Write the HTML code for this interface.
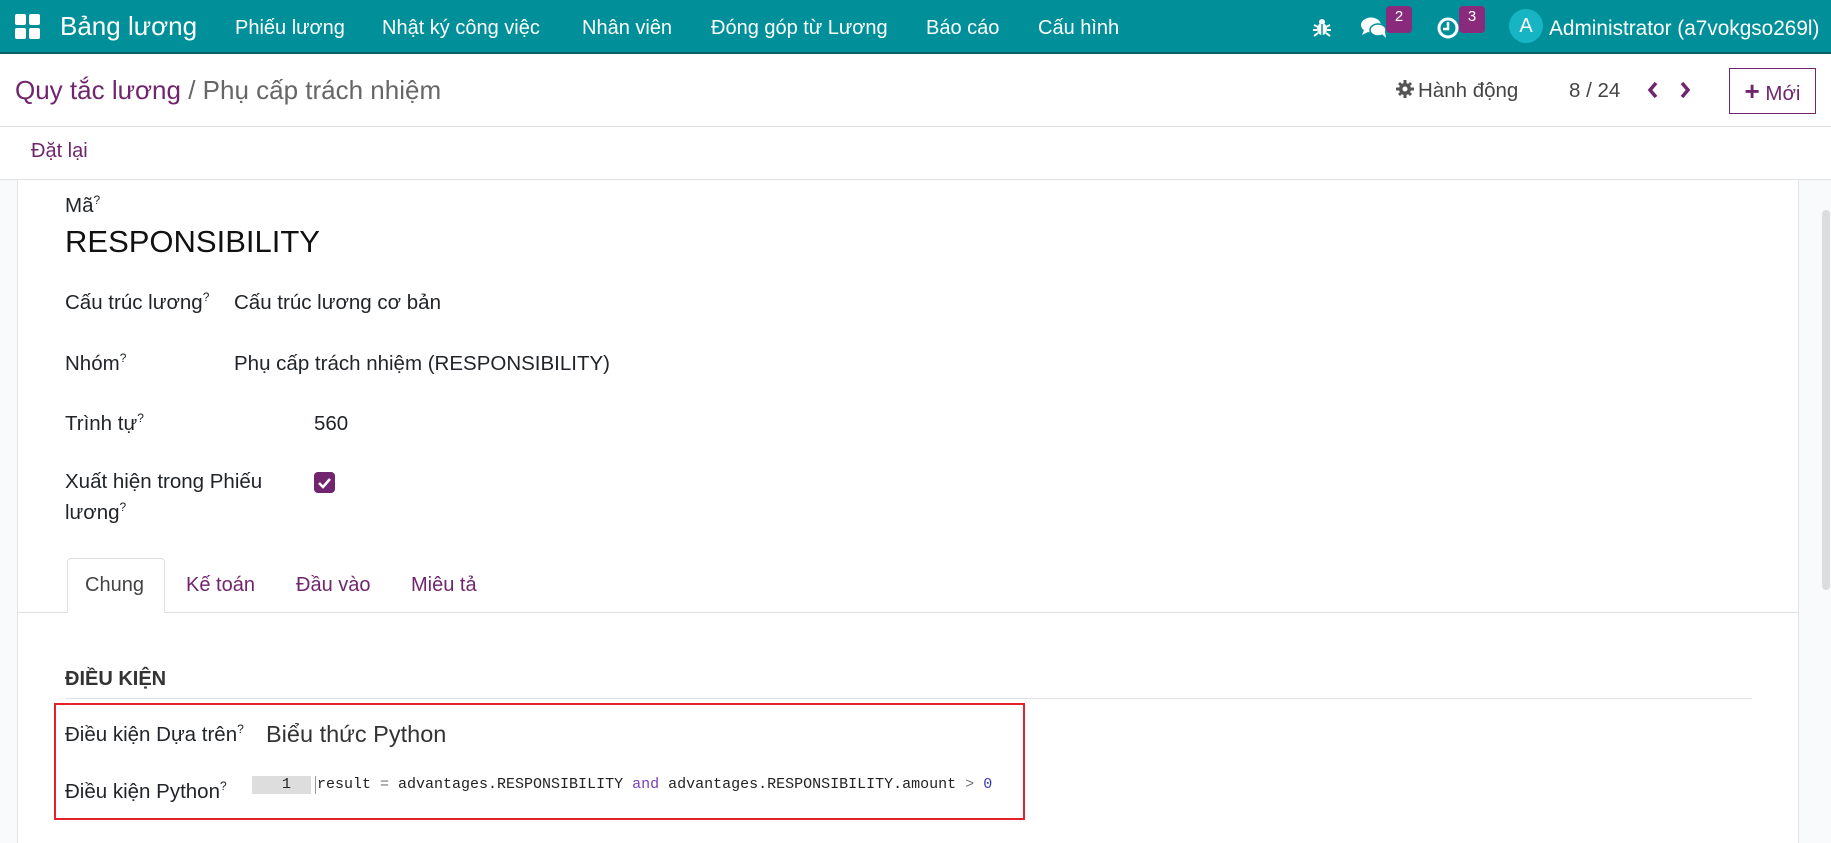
<!DOCTYPE html>
<html><head><meta charset="utf-8"><style>
*{margin:0;padding:0;box-sizing:border-box}
body{width:1831px;height:843px;overflow:hidden;background:#fff;font-family:"Liberation Sans","Noto Sans CJK SC",sans-serif;color:#212529;position:relative}
.a{position:absolute;white-space:nowrap}
.nav{position:absolute;left:0;top:0;width:1831px;height:54px;background:#01909a;border-bottom:2px solid #0a6068}
.nav .a{color:#fff;font-size:20px;top:17px}
.badge{position:absolute;background:#8a2a7d;color:#fff;font-size:15px;border-radius:4px;width:26px;height:27px;text-align:center;line-height:22px;top:6px}
.lbl{font-size:20.5px;color:#212529}
.sup{font-size:12px;vertical-align:super}
.tab{font-size:20px;color:#71256e;top:574px}
</style></head><body>
<div class="nav">
 <svg class="a" style="left:15px;top:14px" width="26" height="26" viewBox="0 0 26 26"><g fill="#fff"><rect x="0" y="0" width="11" height="11" rx="2"/><rect x="14" y="0" width="11" height="11" rx="2"/><rect x="0" y="14" width="11" height="11" rx="2"/><rect x="14" y="14" width="11" height="11" rx="2"/></g></svg>
 <div class="a" style="left:60px;top:11px !important;font-size:26px">Bảng lương</div>
 <div class="a" style="left:235px">Phiếu lương</div>
 <div class="a" style="left:382px">Nhật ký công việc</div>
 <div class="a" style="left:582px">Nhân viên</div>
 <div class="a" style="left:711px">Đóng góp từ Lương</div>
 <div class="a" style="left:926px">Báo cáo</div>
 <div class="a" style="left:1038px">Cấu hình</div>
 <svg class="a" style="left:1312px;top:17px" width="20" height="20" viewBox="0 0 20 20"><g fill="#fff"><ellipse cx="10" cy="12" rx="5" ry="6"/><circle cx="10" cy="5" r="3"/></g><g stroke="#fff" stroke-width="2"><path d="M2 8l4 2M18 8l-4 2M1 13h4M19 13h-4M2 19l4-3M18 19l-4-3"/></g><path d="M10 7v11" stroke="#01909a" stroke-width="1.5"/></svg>
 <svg class="a" style="left:1360px;top:16px" width="28" height="24" viewBox="0 0 28 24"><ellipse cx="11" cy="9" rx="10" ry="7.5" fill="#fff"/><path d="M4 14l-2 5 6-3z" fill="#fff"/><ellipse cx="18" cy="14" rx="8" ry="6" fill="#fff" stroke="#01909a" stroke-width="1.5"/><path d="M22 18l4 4-1-6z" fill="#fff"/></svg>
 <div class="badge" style="left:1386px">2</div>
 <svg class="a" style="left:1436px;top:16px" width="24" height="24" viewBox="0 0 24 24"><circle cx="12" cy="12" r="9" fill="none" stroke="#fff" stroke-width="3"/><path d="M12 6v7H7" fill="none" stroke="#fff" stroke-width="2.5"/></svg>
 <div class="badge" style="left:1459px">3</div>
 <div class="a" style="left:1509px;top:9px !important;width:34px;height:34px;border-radius:50%;background:#17b5c4;text-align:center;line-height:34px;font-size:20px">A</div>
 <div class="a" style="left:1549px;font-size:20.8px!important">Administrator (a7vokgso269l)</div>
</div>
<div class="a" style="left:15px;top:75px;font-size:26px;color:#71256e">Quy tắc lương <span style="color:#666"> / Phụ cấp trách nhiệm</span></div>
<svg class="a" style="left:1396px;top:80px" width="18" height="18" viewBox="0 0 18 18"><g fill="#555"><circle cx="9" cy="9" r="6"/><path d="M7.5 0h3v18h-3zM0 7.5h18v3H0z"/><path d="M2 4l2-2 12 12-2 2zM14 2l2 2-12 12-2-2z"/></g><circle cx="9" cy="9" r="2.5" fill="#fff"/></svg>
<div class="a" style="left:1418px;top:79px;font-size:20.5px;color:#444">Hành động</div>
<div class="a" style="left:1569px;top:79px;font-size:20.5px;color:#444">8 / 24</div>
<svg class="a" style="left:1644px;top:80px" width="60" height="20" viewBox="0 0 60 20"><path d="M12 3l-6 7 6 7M38 3l6 7-6 7" fill="none" stroke="#71256e" stroke-width="3.5"/></svg>
<div class="a" style="left:1729px;top:68px;width:87px;height:46px;border:1px solid #71256e;color:#71256e;font-size:20.5px;text-align:center;line-height:44px"><b style="font-size:26px">+</b> Mới</div>
<div class="a" style="left:0;top:126px;width:1831px;height:1px;background:#dee2e6"></div>
<div class="a" style="left:31px;top:140px;font-size:20px;color:#71256e">Đặt lại</div>
<div class="a" style="left:0;top:179px;width:1831px;height:664px;background:#f9fafb;border-top:1px solid #dee2e6"></div>
<div class="a" style="left:17px;top:180px;width:1782px;height:663px;background:#fff;border-left:1px solid #e4e4e4;border-right:1px solid #e4e4e4"></div>
<div class="a" style="left:1822px;top:210px;width:8px;height:380px;background:#ddd;border-radius:4px"></div>
<div class="a lbl" style="left:65px;top:193px">Mã<span class="sup">?</span></div>
<div class="a" style="left:65px;top:224px;font-size:31px;color:#111">RESPONSIBILITY</div>
<div class="a lbl" style="left:65px;top:290px">Cấu trúc lương<span class="sup">?</span></div>
<div class="a lbl" style="left:234px;top:291px">Cấu trúc lương cơ bản</div>
<div class="a lbl" style="left:65px;top:351px">Nhóm<span class="sup">?</span></div>
<div class="a lbl" style="left:234px;top:352px">Phụ cấp trách nhiệm (RESPONSIBILITY)</div>
<div class="a lbl" style="left:65px;top:411px">Trình tự<span class="sup">?</span></div>
<div class="a lbl" style="left:314px;top:412px">560</div>
<div class="a lbl" style="left:65px;top:470px">Xuất hiện trong Phiếu</div>
<div class="a lbl" style="left:65px;top:500px">lương<span class="sup">?</span></div>
<svg class="a" style="left:314px;top:472px" width="21" height="21" viewBox="0 0 21 21"><rect width="21" height="21" rx="4" fill="#71256e"/><path d="M5 11l4 4 7-8" fill="none" stroke="#fff" stroke-width="2.5"/></svg>
<div class="a" style="left:17px;top:612px;width:1782px;height:1px;background:#dee2e6"></div>
<div class="a" style="left:67px;top:558px;width:98px;height:55px;background:#fff;border:1px solid #dee2e6;border-bottom:none;border-radius:4px 4px 0 0"></div>
<div class="a tab" style="left:85px;color:#444">Chung</div>
<div class="a tab" style="left:186px">Kế toán</div>
<div class="a tab" style="left:296px">Đầu vào</div>
<div class="a tab" style="left:411px">Miêu tả</div>
<div class="a" style="left:65px;top:668px;font-size:20px;font-weight:bold;color:#333">ĐIỀU KIỆN</div>
<div class="a" style="left:65px;top:698px;width:1687px;height:1px;background:#dee2e6"></div>
<div class="a" style="left:54px;top:703px;width:971px;height:117px;border:2px solid #e3232b"></div>
<div class="a lbl" style="left:65px;top:722px">Điều kiện Dựa trên<span class="sup">?</span></div>
<div class="a" style="left:266px;top:721px;font-size:23.5px;color:#333">Biểu thức Python</div>
<div class="a lbl" style="left:65px;top:779px">Điều kiện Python<span class="sup">?</span></div>
<div class="a" style="left:252px;top:776px;width:59px;height:18px;background:#ddd;font-family:'Liberation Mono',monospace;font-size:15px;text-align:right;padding-right:20px;line-height:18px">1</div>
<div class="a" style="left:315px;top:776px;border-left:1px solid #999;padding-left:1px;font-family:'Liberation Mono',monospace;font-size:15px;line-height:18px;color:#222">result <span style="color:#777">=</span> advantages.RESPONSIBILITY <span style="color:#7a3fb8">and</span> advantages.RESPONSIBILITY.amount <span style="color:#777">&gt;</span> <span style="color:#3a3ab8">0</span></div>
</body></html>
